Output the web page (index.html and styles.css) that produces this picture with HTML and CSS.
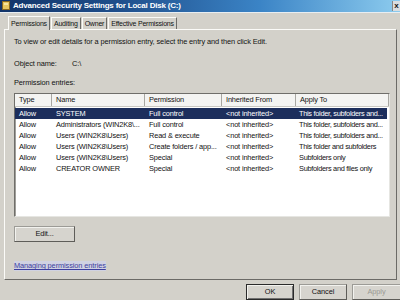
FILE: index.html
```html
<!DOCTYPE html>
<html>
<head>
<meta charset="utf-8">
<link rel="stylesheet" href="styles.css">
</head>
<body>
<div class="window">
  <div class="titlebar">
    <svg class="ticon" width="8" height="9" viewBox="0 0 8 9">
      <rect x="0.5" y="0.5" width="7" height="8" fill="#e8c860" stroke="#8a6a20"/>
      <rect x="2" y="2" width="4" height="2" fill="#f7e6a0"/>
    </svg>
    <span class="title">Advanced Security Settings for Local Disk (C:)</span>
    <span class="close">x</span>
  </div>
  <div class="tabs">
    <span class="tab active">Permissions</span>
    <span class="tab">Auditing</span>
    <span class="tab">Owner</span>
    <span class="tab">Effective Permissions</span>
  </div>
  <div class="panel">
    <p class="intro">To view or edit details for a permission entry, select the entry and then click Edit.</p>
    <div class="objrow"><span class="objlabel">Object name:</span><span>C:\</span></div>
    <div class="label">Permission entries:</div>
    <div class="list">
      <div class="row head">
        <span class="c1">Type</span><span class="c2">Name</span><span class="c3">Permission</span><span class="c4">Inherited From</span><span class="c5">Apply To</span>
      </div>
      <div class="row sel">
        <span class="c1">Allow</span><span class="c2">SYSTEM</span><span class="c3">Full control</span><span class="c4">&lt;not inherited&gt;</span><span class="c5">This folder, subfolders and...</span>
      </div>
      <div class="row">
        <span class="c1">Allow</span><span class="c2">Administrators (WIN2K8\...</span><span class="c3">Full control</span><span class="c4">&lt;not inherited&gt;</span><span class="c5">This folder, subfolders and...</span>
      </div>
      <div class="row">
        <span class="c1">Allow</span><span class="c2">Users (WIN2K8\Users)</span><span class="c3">Read &amp; execute</span><span class="c4">&lt;not inherited&gt;</span><span class="c5">This folder, subfolders and...</span>
      </div>
      <div class="row">
        <span class="c1">Allow</span><span class="c2">Users (WIN2K8\Users)</span><span class="c3">Create folders / app...</span><span class="c4">&lt;not inherited&gt;</span><span class="c5">This folder and subfolders</span>
      </div>
      <div class="row">
        <span class="c1">Allow</span><span class="c2">Users (WIN2K8\Users)</span><span class="c3">Special</span><span class="c4">&lt;not inherited&gt;</span><span class="c5">Subfolders only</span>
      </div>
      <div class="row">
        <span class="c1">Allow</span><span class="c2">CREATOR OWNER</span><span class="c3">Special</span><span class="c4">&lt;not inherited&gt;</span><span class="c5">Subfolders and files only</span>
      </div>
    </div>
    <div class="btn edit">Edit...</div>
    <a class="link" href="#">Managing permission entries</a>
  </div>
  <div class="footer">
    <div class="btn ok">OK</div>
    <div class="btn">Cancel</div>
    <div class="btn disabled">Apply</div>
  </div>
</div>
</body>
</html>
```
FILE: styles.css
```css
html, body {
  margin: 0;
  padding: 0;
  background: #d3d1ca;
}
.window {
  width: 400px;
  height: 300px;
  display: flex;
  flex-direction: column;
  background: #d3d1ca;
  font-family: "Liberation Sans", Arial, sans-serif;
  font-size: 7.4px;
  letter-spacing: -0.1px;
  color: #111;
  overflow: hidden;
}
.titlebar {
  height: 12px;
  display: flex;
  align-items: center;
  background: linear-gradient(to right, #123468 0%, #1f4f8c 30%, #3b84c6 65%, #8ccbee 100%);
  border-bottom: 1px solid #e8eef2;
}
.ticon {
  margin-left: 2px;
  margin-right: 3px;
  flex: none;
}
.title {
  color: #fff;
  font-weight: bold;
  font-size: 8px;
  letter-spacing: -0.2px;
  white-space: nowrap;
}
.close {
  margin-left: auto;
  width: 7px;
  height: 10px;
  background: #d9dde0;
  border-left: 1px solid #888;
  color: #111;
  font-weight: bold;
  font-size: 8px;
  line-height: 9px;
  text-align: center;
}
.tabs {
  display: flex;
  align-items: flex-end;
  height: 17px;
  padding-left: 8px;
}
.tab {
  height: 11px;
  line-height: 11px;
  padding: 0 2px;
  margin-right: 1px;
  border: 1px solid #fbfbf8;
  border-right-color: #6b6a66;
  border-bottom: none;
  white-space: nowrap;
  font-size: 7px;
  letter-spacing: -0.2px;
}
.tab.active {
  height: 13px;
  line-height: 13px;
  margin-bottom: -1px;
  background: #d3d1ca;
  position: relative;
  z-index: 1;
}
.panel {
  margin: 0 3px 0 4px;
  height: 247px;
  border: 1px solid #fbfbf8;
  border-right-color: #6b6a66;
  border-bottom-color: #6b6a66;
  padding: 7px 0 0 9px;
  display: flex;
  flex-direction: column;
  align-items: flex-start;
}
.intro {
  margin: 0;
  line-height: 10px;
  white-space: nowrap;
}
.objrow {
  margin-top: 12px;
  line-height: 10px;
  display: flex;
}
.objlabel {
  width: 58px;
}
.label {
  margin-top: 9px;
  line-height: 10px;
}
.list {
  margin-top: 5px;
  width: 374px;
  height: 122px;
  background: #fff;
  border: 1px solid #6f6e6a;
  border-right-color: #e6e6e2;
  border-bottom-color: #e6e6e2;
  box-shadow: inset 1px 1px 0 #a09f9a;
}
.row {
  display: flex;
  height: 11px;
  line-height: 11px;
  white-space: nowrap;
  margin-right: 2px;
  letter-spacing: -0.15px;
}
.row span {
  padding-left: 4px;
  overflow: hidden;
  text-overflow: ellipsis;
  box-sizing: border-box;
  flex: none;
}
.row.head {
  height: 12px;
  line-height: 12px;
  background: #f4f4f2;
  border-bottom: 1px solid #c9c8c2;
  margin-right: 0;
  margin-bottom: 1px;
}
.row.head span {
  border-right: 1px solid #a8a7a2;
}
.row.sel {
  background: #1c2e5c;
  color: #fff;
}
.c1 { width: 37px; }
.c2 { width: 93px; }
.c3 { width: 77px; }
.c4 { width: 74px; }
.row .c5 { flex: 1; padding-left: 3px; letter-spacing: -0.3px; text-overflow: clip; }
.row.head .c5 { flex: none; width: 93px; padding-left: 4px; letter-spacing: -0.15px; }
.btn {
  width: 59px;
  height: 13px;
  line-height: 13px;
  text-align: center;
  background: #d6d4ce;
  border: 1px solid #5e5d59;
  border-top-color: #9c9b96;
  border-left-color: #9c9b96;
  box-shadow: inset 1px 1px 0 #f2f2ee;
}
.edit {
  margin-top: 9px;
  height: 14px;
  line-height: 14px;
}
.link {
  margin-top: 19px;
  color: #3d3e9e;
  text-decoration: underline;
  background: #d0d2e2;
  line-height: 10px;
}
.footer {
  display: flex;
  justify-content: flex-end;
  gap: 5px;
  padding-top: 4px;
}
.footer .btn {
  width: 46px;
  height: 14px;
  line-height: 14px;
}
.footer .ok {
  border: 1px solid #2a2a2a;
  box-shadow: inset 1px 1px 0 #f2f2ee, inset -1px -1px 0 #707070;
}
.footer .disabled {
  color: #9a9993;
  border-right: none;
  width: 47px;
}
```
